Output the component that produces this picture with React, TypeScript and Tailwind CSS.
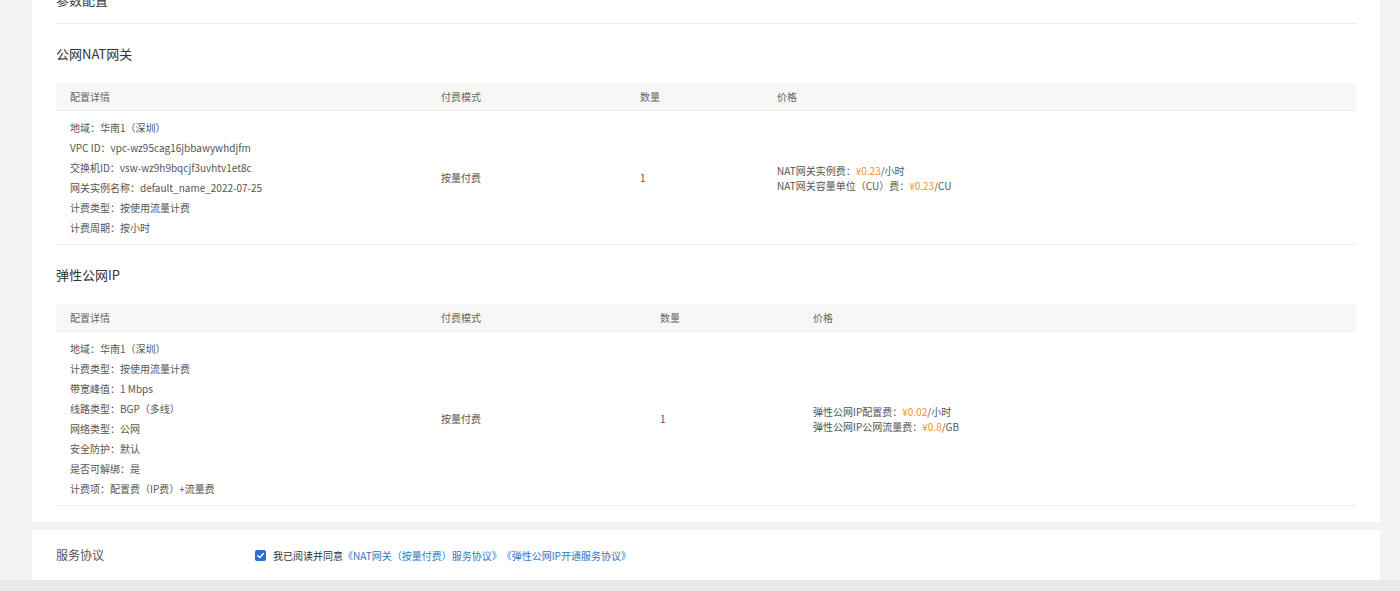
const font = { fontFamily: '"Noto Sans CJK SC", "Noto Sans", sans-serif' };

type Section = {
  title: string;
  cols: string;
  details: string[];
  prices: { label: string; value: string; unit: string }[];
};

const sections: Section[] = [
  {
    title: '公网NAT网关',
    cols: 'grid-cols-[385px_199px_137px_1fr]',
    details: [
      '地域：华南1（深圳）',
      'VPC ID：vpc-wz95cag16jbbawywhdjfm',
      '交换机ID：vsw-wz9h9bqcjf3uvhtv1et8c',
      '网关实例名称：default_name_2022-07-25',
      '计费类型：按使用流量计费',
      '计费周期：按小时',
    ],
    prices: [
      { label: 'NAT网关实例费：', value: '¥0.23', unit: '/小时' },
      { label: 'NAT网关容量单位（CU）费：', value: '¥0.23', unit: '/CU' },
    ],
  },
  {
    title: '弹性公网IP',
    cols: 'grid-cols-[385px_219px_153px_1fr]',
    details: [
      '地域：华南1（深圳）',
      '计费类型：按使用流量计费',
      '带宽峰值：1 Mbps',
      '线路类型：BGP（多线）',
      '网络类型：公网',
      '安全防护：默认',
      '是否可解绑：是',
      '计费项：配置费（IP费）+流量费',
    ],
    prices: [
      { label: '弹性公网IP配置费：', value: '¥0.02', unit: '/小时' },
      { label: '弹性公网IP公网流量费：', value: '¥0.8', unit: '/GB' },
    ],
  },
];

function ConfigTable({ s }: { s: Section }) {
  return (
    <div>
      <div className="h-5 mt-5 mb-[19px] flex items-center text-[13px] text-[#333]">{s.title}</div>
      <div className={`grid ${s.cols} h-7 items-center bg-[#f7f7f7] border-b border-[#eee] text-[10px] text-[#666]`}>
        <div className="pl-[14px]">配置详情</div>
        <div>付费模式</div>
        <div>数量</div>
        <div>价格</div>
      </div>
      <div className={`grid ${s.cols} items-center border-b border-[#eee] text-[10px] text-[#555]`}>
        <div className="pl-[14px] pt-[7px] pb-[6px]">
          {s.details.map((d) => (
            <div key={d} className="h-5 leading-5">{d}</div>
          ))}
        </div>
        <div>按量付费</div>
        <div>1</div>
        <div>
          {s.prices.map((p) => (
            <div key={p.label} className="leading-[15px]">
              {p.label}
              <span className="text-[#f5922f]">{p.value}</span>
              {p.unit}
            </div>
          ))}
        </div>
      </div>
    </div>
  );
}

export default function App() {
  return (
    <div className="w-[1400px] h-[591px] overflow-hidden bg-[#f2f3f5] [text-spacing-trim:space-all]" style={font}>
      <div className="ml-8 mr-5 bg-white px-6 pb-4">
        <div className="h-6 border-b border-[#eee] overflow-hidden">
          <div className="-mt-[10px] text-[13px] text-[#333]">参数配置</div>
        </div>
        {sections.map((s) => (
          <ConfigTable key={s.title} s={s} />
        ))}
      </div>
      <div className="ml-8 mr-5 mt-2 h-[50px] bg-white px-6 flex items-center text-[10px]">
        <div className="w-[199px] text-[12px] text-[#555]">服务协议</div>
        <span className="w-[11px] h-[11px] bg-[#2a6fd6] rounded-[2px] flex items-center justify-center mr-[7px]">
          <svg width="9" height="9" viewBox="0 0 10 10" fill="none">
            <path d="M2 5.2 L4.2 7.3 L8.2 2.8" stroke="white" strokeWidth="1.6" strokeLinecap="round" strokeLinejoin="round" />
          </svg>
        </span>
        <span className="text-[#333]">我已阅读并同意</span>
        <span className="text-[#2f78c8]">《NAT网关（按量付费）服务协议》《弹性公网IP开通服务协议》</span>
      </div>
      <div className="h-3 bg-[#e8e9eb]" />
    </div>
  );
}
